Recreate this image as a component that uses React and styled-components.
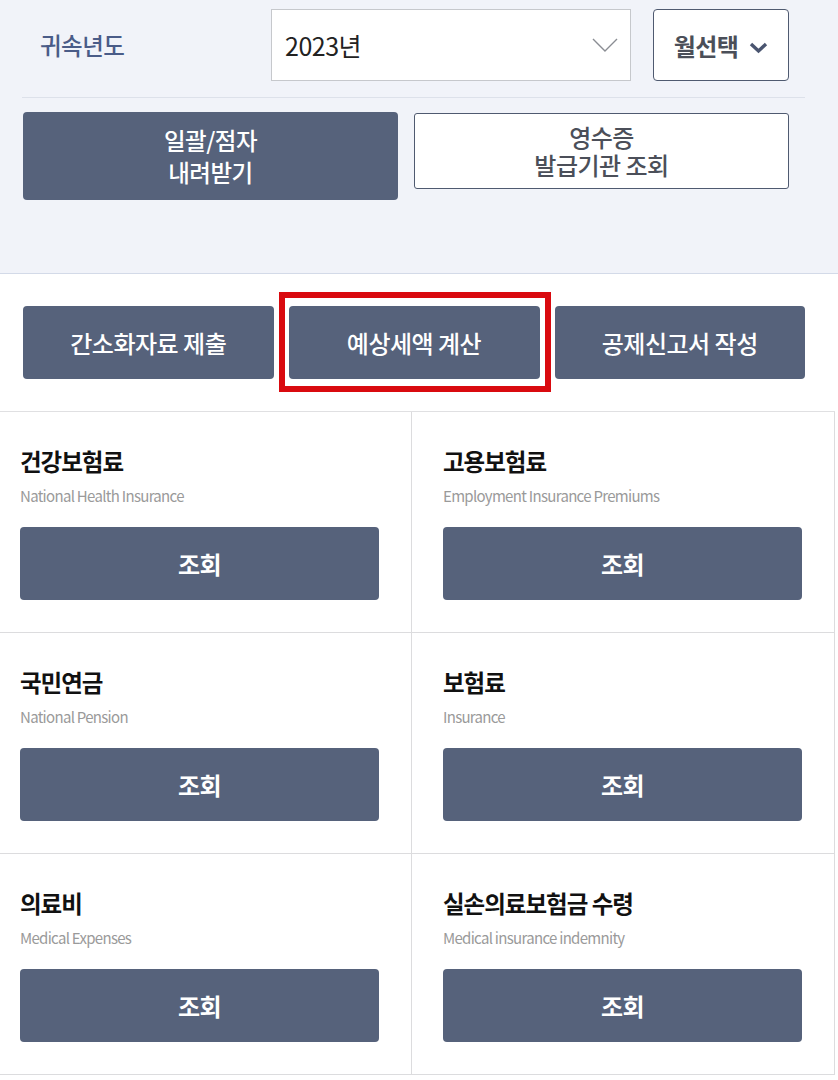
import styled, { createGlobalStyle } from "styled-components";

const GlobalStyle = createGlobalStyle`
  body {
    margin: 0;
    background: #ffffff;
    font-family: "Noto Sans CJK KR", "Noto Sans", sans-serif;
  }
  * { box-sizing: border-box; }
`;

const items = [
  { title: "건강보험료", sub: "National Health Insurance" },
  { title: "고용보험료", sub: "Employment Insurance Premiums" },
  { title: "국민연금", sub: "National Pension" },
  { title: "보험료", sub: "Insurance" },
  { title: "의료비", sub: "Medical Expenses" },
  { title: "실손의료보험금 수령", sub: "Medical insurance indemnity" },
];

const App = () => {
  return (
    <Page>
      <GlobalStyle />
      <TopPanel>
        <FilterRow>
          <Label>귀속년도</Label>
          <YearSelect>
            2023년
            <svg width="26" height="14" viewBox="0 0 26 14">
              <polyline points="1,1 13,13 25,1" fill="none" stroke="#8a8d93" strokeWidth="1.4" />
            </svg>
          </YearSelect>
          <MonthButton>
            월선택
            <svg width="19" height="13" viewBox="0 0 19 13">
              <polyline points="2,3 9.5,10 17,3" fill="none" stroke="#4a5570" strokeWidth="3.4" />
            </svg>
          </MonthButton>
        </FilterRow>
        <Divider />
        <ActionRow>
          <DarkAction>
            <span>일괄/점자</span>
            <span>내려받기</span>
          </DarkAction>
          <LightAction>
            <span>영수증</span>
            <span>발급기관 조회</span>
          </LightAction>
        </ActionRow>
      </TopPanel>

      <TabRow>
        <TabButton>간소화자료 제출</TabButton>
        <Highlighted>
          <TabButton>예상세액 계산</TabButton>
        </Highlighted>
        <TabButton>공제신고서 작성</TabButton>
      </TabRow>

      <Grid>
        {items.map((item, index) => (
          <Cell key={index} $right={index % 2 === 1}>
            <CellTitle>{item.title}</CellTitle>
            <CellSub>{item.sub}</CellSub>
            <QueryButton>조회</QueryButton>
          </Cell>
        ))}
      </Grid>
    </Page>
  );
};

const Page = styled.div`
  width: 838px;
  min-height: 1080px;
  background: #ffffff;
`;

const TopPanel = styled.div`
  height: 274px;
  background: #f1f3f9;
  border-bottom: 1px solid #d3dae8;
  padding-top: 9px;
`;

const FilterRow = styled.div`
  display: flex;
  align-items: center;
  height: 72px;
`;

const Label = styled.div`
  width: 271px;
  padding-left: 40px;
  font-size: 23.5px;
  font-weight: 500;
  color: #4a5c88;
  letter-spacing: -0.5px;
`;

const YearSelect = styled.div`
  width: 360px;
  height: 72px;
  background: #ffffff;
  border: 1px solid #c6c8cc;
  display: flex;
  align-items: center;
  justify-content: space-between;
  padding: 0 12px 0 13px;
  font-size: 25px;
  color: #222;
  letter-spacing: -0.5px;
`;

const MonthButton = styled.div`
  margin-left: 22px;
  width: 136px;
  height: 72px;
  background: #ffffff;
  border: 1px solid #4f5a70;
  border-radius: 4px;
  display: flex;
  align-items: center;
  justify-content: center;
  gap: 11px;
  font-size: 24px;
  font-weight: 700;
  color: #4b4f59;
  letter-spacing: -0.5px;
  svg { margin-top: 4px; }
`;

const Divider = styled.div`
  margin: 16px 33px 0 22px;
  height: 1px;
  background: #dde1ea;
`;

const ActionRow = styled.div`
  display: flex;
  align-items: flex-start;
  gap: 16px;
  padding: 14px 0 0 23px;
`;

const ActionBase = styled.div`
  width: 375px;
  border-radius: 4px;
  display: flex;
  flex-direction: column;
  align-items: center;
  justify-content: center;
  text-align: center;
  font-weight: 500;
  letter-spacing: -0.5px;
  span { display: block; }
`;

const DarkAction = styled(ActionBase)`
  height: 88px;
  background: #56627b;
  color: #ffffff;
  font-size: 23.5px;
  line-height: 32px;
`;

const LightAction = styled(ActionBase)`
  height: 76px;
  margin-top: 1px;
  border-radius: 3px;
  background: #ffffff;
  border: 1px solid #4f5a70;
  color: #4b4f59;
  font-size: 24px;
  line-height: 28px;
`;

const TabRow = styled.div`
  display: flex;
  gap: 15px;
  padding: 32px 33px 0 23px;
`;

const Highlighted = styled.div`
  position: relative;
  display: flex;
  &::after {
    content: "";
    position: absolute;
    top: -14px;
    left: -10px;
    right: -11px;
    bottom: -13px;
    border: 6px solid #d90a0f;
    pointer-events: none;
  }
`;

const TabButton = styled.div`
  width: 251px;
  height: 73px;
  border-radius: 4px;
  background: #56627b;
  color: #ffffff;
  display: flex;
  align-items: center;
  justify-content: center;
  font-size: 24px;
  font-weight: 500;
  letter-spacing: -0.5px;
`;

const Grid = styled.div`
  margin-top: 32px;
  width: 835px;
  display: grid;
  grid-template-columns: 412px 423px;
  border-top: 1px solid #e0e0e2;
`;

const Cell = styled.div`
  height: 221px;
  border-right: 1px solid #dcdcde;
  border-bottom: 1px solid #dcdcde;
  padding: 34px 32px 0 ${(p) => (p.$right ? "31px" : "20px")};
  display: flex;
  flex-direction: column;
`;

const CellTitle = styled.div`
  font-size: 23.5px;
  font-weight: 700;
  line-height: 30px;
  color: #111;
  letter-spacing: -1px;
`;

const CellSub = styled.div`
  margin-top: 10px;
  font-size: 15px;
  line-height: 20px;
  color: #9a9a9a;
  letter-spacing: -0.7px;
`;

const QueryButton = styled.div`
  margin-top: 21px;
  height: 73px;
  border-radius: 4px;
  background: #56627b;
  color: #ffffff;
  display: flex;
  align-items: center;
  justify-content: center;
  font-size: 24px;
  font-weight: 700;
  letter-spacing: -0.5px;
`;

export default App;
